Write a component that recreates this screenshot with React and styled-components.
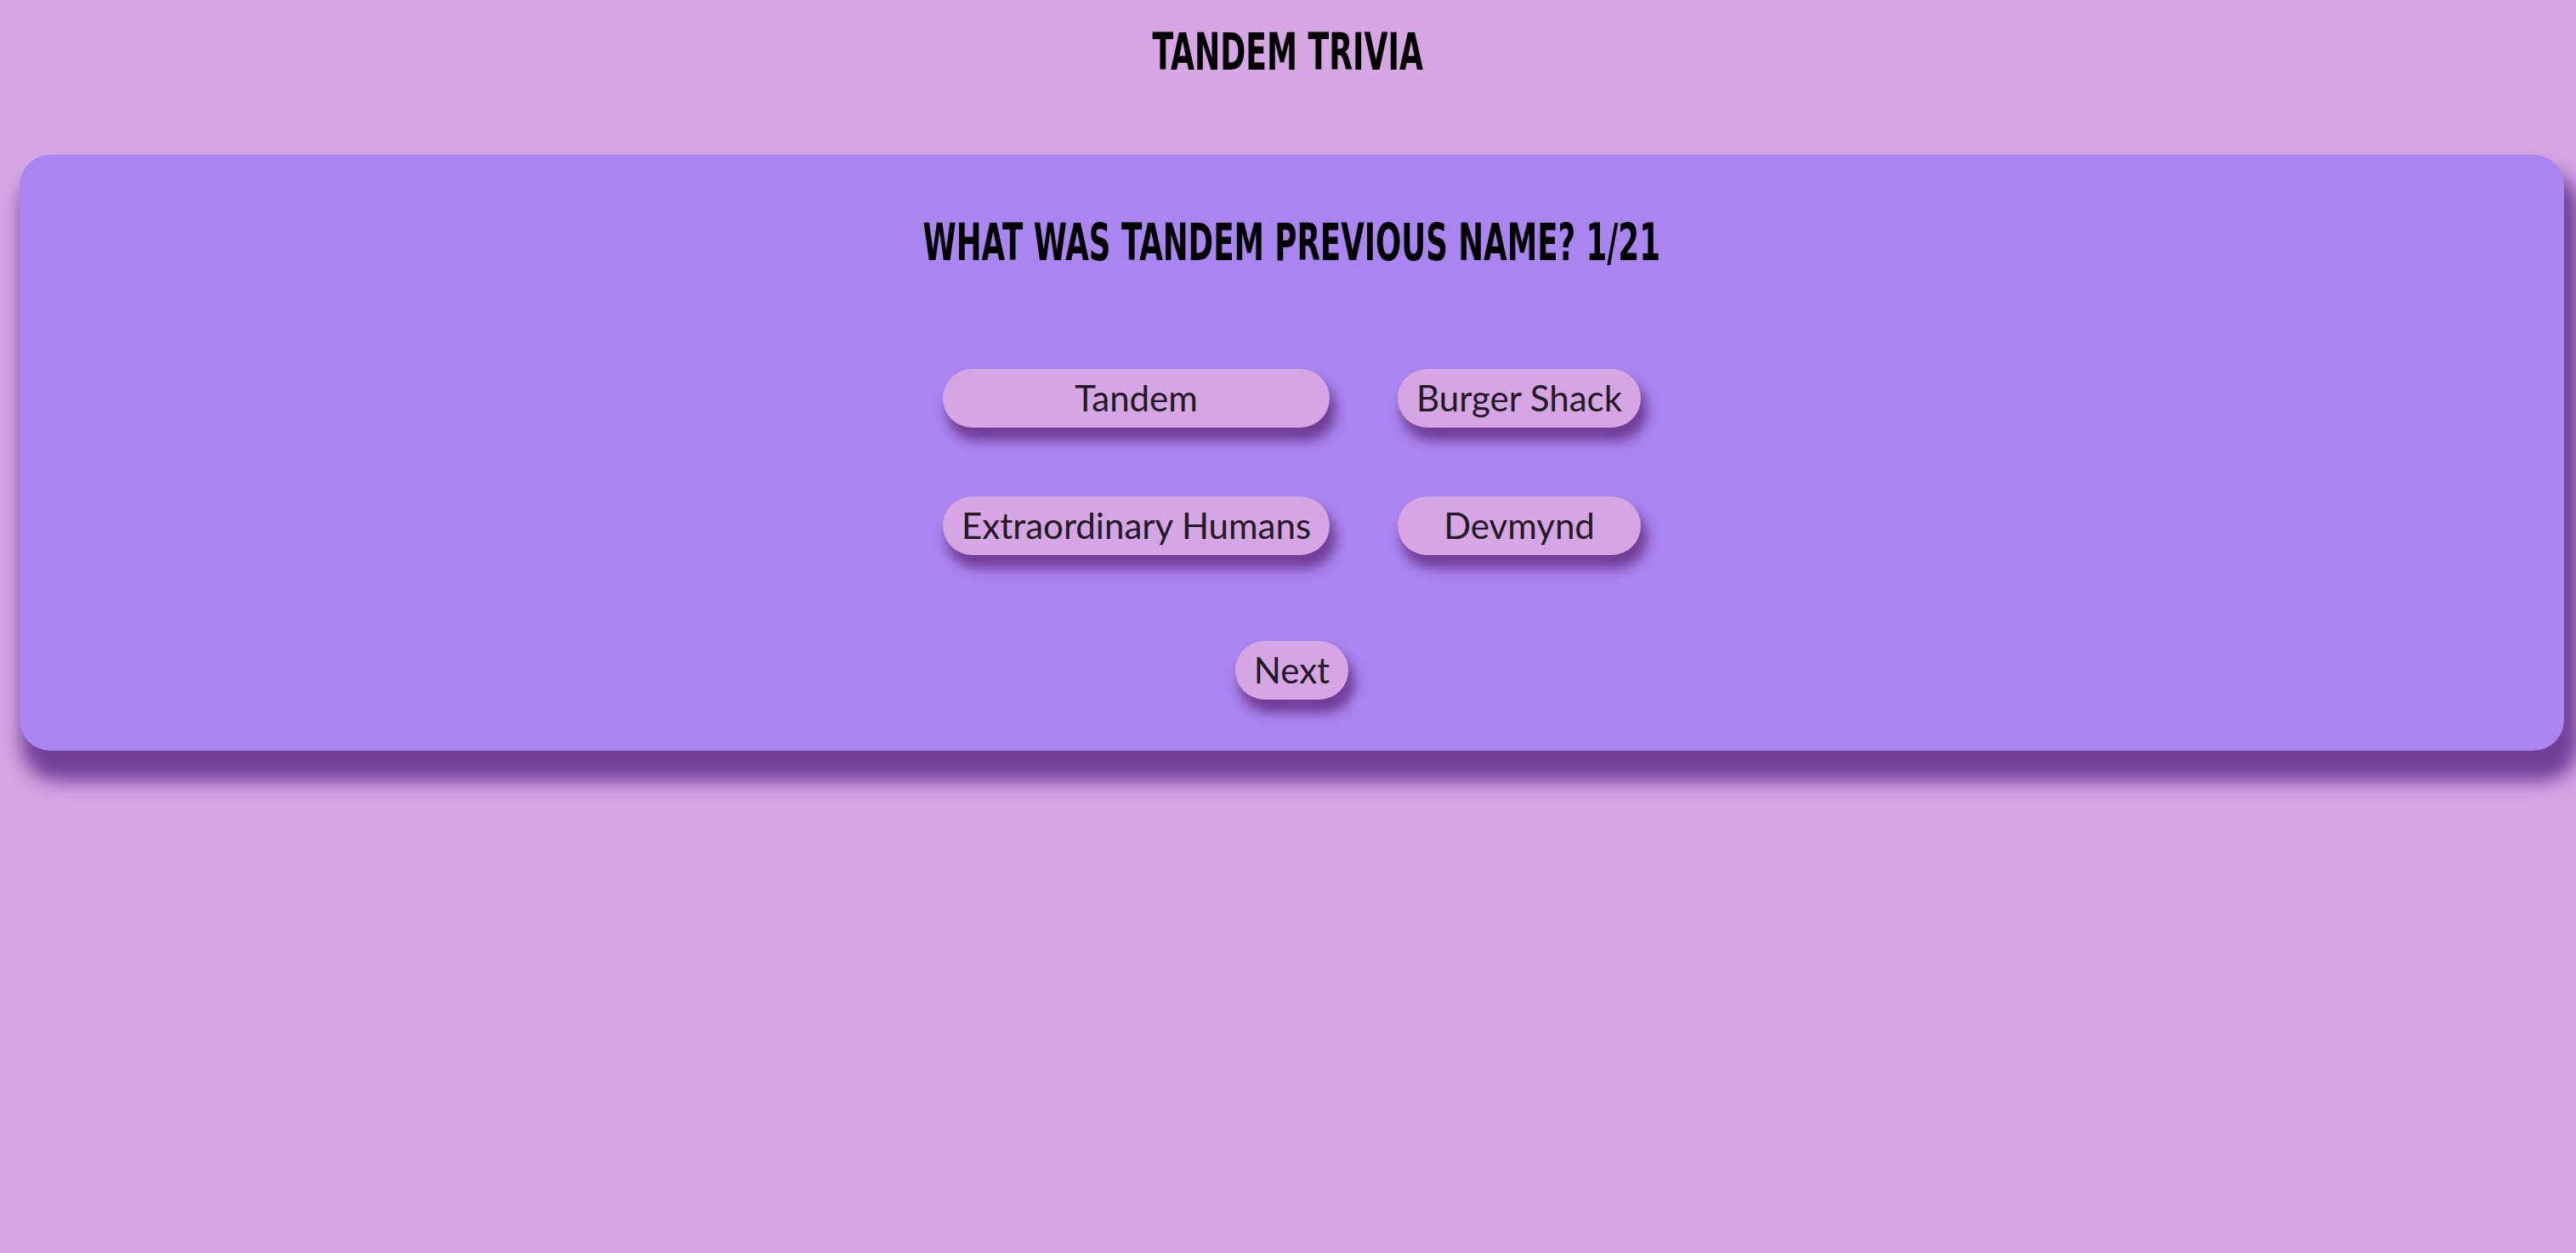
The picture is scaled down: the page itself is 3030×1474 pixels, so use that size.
import styled, { createGlobalStyle } from 'styled-components';

const GlobalStyle = createGlobalStyle`
  html, body {
    margin: 0;
    padding: 0;
    background: #d6a5e3;
  }

  body {
    min-height: 1474px;
    font-family: 'Lato', 'Liberation Sans', sans-serif;
  }
`;

const Page = styled.div`
  display: flex;
  flex-direction: column;
  padding-top: 31px;
`;

const Title = styled.h1`
  margin: 0 0 91px;
  text-align: center;
  font-family: 'Liberation Sans Narrow', 'DejaVu Sans Condensed', sans-serif;
  font-weight: 700;
  font-size: 60px;
  line-height: 60px;
  color: #000;
  text-transform: uppercase;

  span {
    display: inline-block;
    transform: scaleX(0.67);
  }
`;

const Card = styled.section`
  display: flex;
  flex-direction: column;
  align-items: center;
  margin: 0 14px 0 23px;
  padding: 73px 0 60px;
  background: #aa85f0;
  border-radius: 36px;
  box-shadow: 10px 28px 22px 8px #713f98;
`;

const Question = styled.h2`
  margin: 0 0 119px;
  text-align: center;
  font-family: 'Liberation Sans Narrow', 'DejaVu Sans Condensed', sans-serif;
  font-weight: 700;
  font-size: 60px;
  line-height: 60px;
  color: #000;
  text-transform: uppercase;

  span {
    display: inline-block;
    transform: scaleX(0.66);
  }
`;

const Answers = styled.div`
  display: grid;
  grid-template-columns: auto auto;
  gap: 81px 80px;
  justify-content: center;
  margin-bottom: 101px;
`;

const PillButton = styled.button`
  display: block;
  padding: 10px 22px;
  border: none;
  border-radius: 999px;
  background: #d6a5e3;
  color: #221a24;
  font-family: 'Lato', 'Liberation Sans', sans-serif;
  font-size: 42px;
  line-height: 49px;
  white-space: nowrap;
  box-shadow: 6px 14px 14px 2px #713f98;
  cursor: pointer;
`;

const answers = ['Tandem', 'Burger Shack', 'Extraordinary Humans', 'Devmynd'];

const App = () => {
  return (
    <>
      <GlobalStyle />
      <Page>
        <Title>
          <span>Tandem Trivia</span>
        </Title>
        <Card>
          <Question>
            <span>What was Tandem previous name? 1/21</span>
          </Question>
          <Answers>
            {answers.map((answer) => (
              <PillButton key={answer}>{answer}</PillButton>
            ))}
          </Answers>
          <PillButton>Next</PillButton>
        </Card>
      </Page>
    </>
  );
};

export default App;
